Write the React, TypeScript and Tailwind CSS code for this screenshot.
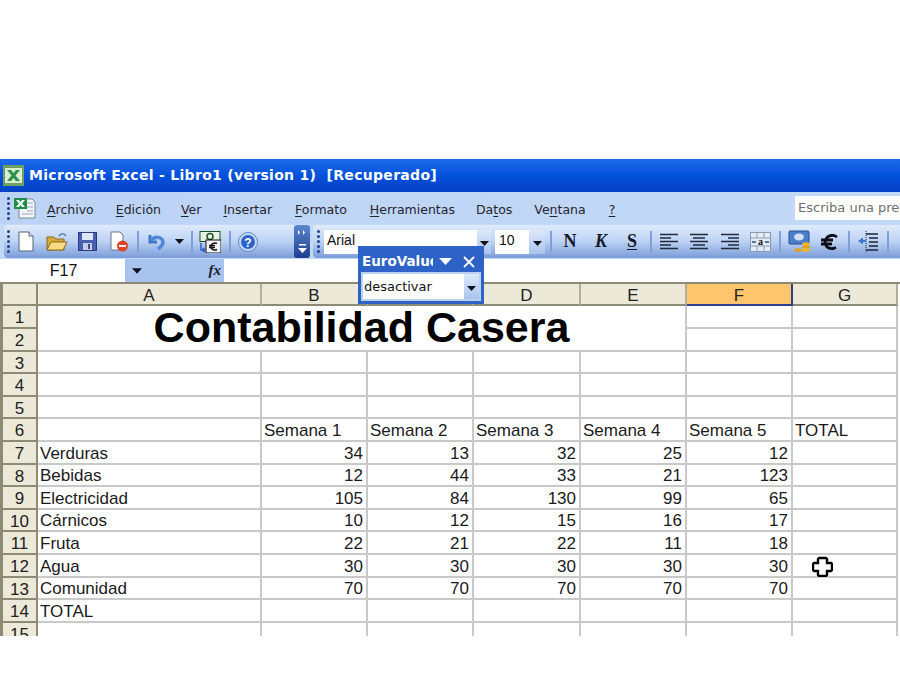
const sans = "font-['Liberation_Sans',Arial,sans-serif]";

const colWidths = "grid-cols-[38px_224px_106px_106px_107px_106px_106px_105px]";
const rowHeights =
  "grid-rows-[22px_23px_23px_22px_23px_22px_23px_23px_22px_23px_22px_23px_23px_22px_23px_22px]";

const rows: (string | number)[][] = [
  ["", "Semana 1", "Semana 2", "Semana 3", "Semana 4", "Semana 5", "TOTAL"],
  ["Verduras", 34, 13, 32, 25, 12, ""],
  ["Bebidas", 12, 44, 33, 21, 123, ""],
  ["Electricidad", 105, 84, 130, 99, 65, ""],
  ["Cárnicos", 10, 12, 15, 16, 17, ""],
  ["Fruta", 22, 21, 22, 11, 18, ""],
  ["Agua", 30, 30, 30, 30, 30, ""],
  ["Comunidad", 70, 70, 70, 70, 70, ""],
  ["TOTAL", "", "", "", "", "", ""],
  ["", "", "", "", "", "", ""],
];

function Grip() {
  return (
    <div className="flex w-[3px] shrink-0 flex-col gap-[2px]">
      {[0, 1, 2, 3, 4].map((i) => (
        <span key={i} className="h-[3px] w-[3px] rounded-full bg-[#27418f]" />
      ))}
    </div>
  );
}

function Sep({ className }: { className: string }) {
  return <span className={`h-[21px] w-[2px] shrink-0 bg-[#7f9fd6] ${className}`} />;
}

function Arrow({ className = "" }: { className?: string }) {
  return (
    <svg width="9" height="5" viewBox="0 0 9 5" className={`shrink-0 ${className}`}>
      <path d="M0 0h9L4.500 5z" fill="#10131c" />
    </svg>
  );
}

function DropButton({ className }: { className: string }) {
  return (
    <span className={`flex items-center justify-center bg-gradient-to-b from-[#dfeafb] to-[#a9c3ee] ${className}`}>
      <Arrow className="mt-1" />
    </span>
  );
}

function Menu({ pre, u, post, className }: { pre?: string; u: string; post?: string; className: string }) {
  return (
    <span className={`mt-[4px] whitespace-nowrap ${className}`}>
      {pre}
      <span className="underline underline-offset-2">{u}</span>
      {post}
    </span>
  );
}

function Aligned({ kind }: { kind: "left" | "center" | "right" }) {
  const rows = kind === "left"
    ? ["M0 1.500h18", "M0 5h11", "M0 8.500h18", "M0 12h11", "M0 15.500h18"]
    : kind === "center"
      ? ["M0 1.500h18", "M3 5h12", "M0 8.500h18", "M3 12h12", "M0 15.500h18"]
      : ["M0 1.500h18", "M7 5h11", "M0 8.500h18", "M7 12h11", "M0 15.500h18"];
  return (
    <svg width="18" height="17" viewBox="0 0 18 17" className="shrink-0">
      {rows.map((d) => (
        <path key={d} d={d} stroke="#23283a" strokeWidth="1.600" />
      ))}
    </svg>
  );
}

function ExcelCursor() {
  return (
    <svg width="21" height="21" viewBox="0 0 21 21">
      <path
        d="M7 2h7l1 1v4h4l1 1v6l-1 1h-4v4l-1 1H7l-1-1v-4H2l-1-1V8l1-1h4V3z"
        fill="#fff"
        stroke="#000"
        strokeWidth="2.400"
      />
    </svg>
  );
}

function TitleBar() {
  return (
    <div className="flex h-[33px] items-center bg-gradient-to-b from-[#1f6bec] via-[#0350dc] to-[#0542c4] pl-[3px]">
      <svg width="21" height="21" viewBox="0 0 21 21" className="shrink-0">
        <rect width="21" height="21" fill="#6f9f62" />
        <rect x="2" y="3" width="17" height="15" fill="#dcecd2" />
        <path d="M4 5h4l2.500 3L13 5h4l-4.500 5.500L17 16h-4l-2.500-3L8 16H4l4.500-5.500z" fill="#2a9350" />
      </svg>
      <span className="ml-[5px] whitespace-pre font-['DejaVu_Sans',sans-serif] text-[14px] font-bold tracking-[0.3px] text-white">
        Microsoft Excel - Libro1 (version 1)  [Recuperado]
      </span>
    </div>
  );
}

function MenuBar() {
  return (
    <div className="flex h-[32px] items-center bg-gradient-to-r from-[#bcd3f5] to-[#c3d9f8] pl-[7px] font-['DejaVu_Sans',sans-serif] text-[12.5px] text-[#1f2430]">
      <Grip />
      <svg width="26" height="23" viewBox="0 0 26 23" className="ml-[1px] shrink-0">
        <path d="M8 2h13l3 3v16H8z" fill="#f4f6fb" stroke="#7d8794" />
        <path d="M16 6h6M16 10h6M16 14h6M11 17h11" stroke="#9aa6b8" />
        <rect x="3" y="1" width="13" height="11" fill="#1f8f45" />
        <path d="M5 3h3l1.500 2L11 3h3l-3 3.500L14 10h-3L9.500 8 8 10H5l3-3.500z" fill="#fff" />
      </svg>
      <Menu u="A" post="rchivo" className="ml-[10px]" />
      <Menu u="E" post="dición" className="ml-[22px]" />
      <Menu u="V" post="er" className="ml-[20px]" />
      <Menu u="I" post="nsertar" className="ml-[22px]" />
      <Menu u="F" post="ormato" className="ml-[23px]" />
      <Menu u="H" post="erramientas" className="ml-[23px]" />
      <Menu pre="Da" u="t" post="os" className="ml-[21px]" />
      <Menu pre="Ve" u="n" post="tana" className="ml-[22px]" />
      <Menu u="?" className="ml-[23px]" />
      <div className="ml-auto flex h-[24px] w-[105px] items-center overflow-hidden bg-white pl-[3px] text-[13px] whitespace-nowrap text-[#6f6f6f]">
        Escriba una pregunta
      </div>
    </div>
  );
}

function StandardBar() {
  return (
    <div className="relative flex h-[33px] w-[306px] shrink-0 items-center rounded-[4px] bg-gradient-to-b from-[#e0ebfc] via-[#bcd2f4] to-[#7b9cd8] pl-[3px]">
      <Grip />
      <svg width="16" height="21" viewBox="0 0 16 21" className="ml-[8px] shrink-0">
        <path d="M1 1h10l4 4v15H1z" fill="#fff" stroke="#59657d" />
        <path d="M11 1v4h4" fill="#dfe6f2" stroke="#59657d" />
      </svg>
      <svg width="22" height="20" viewBox="0 0 22 20" className="ml-[12px] shrink-0">
        <path d="M1 5h7l2 2h8v11H1z" fill="#d8a93a" stroke="#8a6a1c" />
        <path d="M1 18l4-8h16l-4 8z" fill="#f7dc84" stroke="#8a6a1c" />
        <path d="M13 4c2-3 5-3 7 0" fill="none" stroke="#5a7fbd" strokeWidth="1.500" />
      </svg>
      <svg width="19" height="19" viewBox="0 0 19 19" className="ml-[10px] shrink-0">
        <rect x="0.500" y="0.500" width="18" height="18" fill="#4a5fb0" stroke="#2a3a80" />
        <rect x="4" y="1" width="11" height="7" fill="#dfe6f6" />
        <rect x="5" y="11" width="9" height="7" fill="#c8cede" />
        <rect x="10" y="12" width="2" height="5" fill="#3c4a90" />
      </svg>
      <svg width="19" height="21" viewBox="0 0 19 21" className="ml-[13px] shrink-0">
        <path d="M1 1h9l3 3v15H1z" fill="#fff" stroke="#6b7488" />
        <circle cx="12.500" cy="15" r="5.500" fill="#e0452a" />
        <rect x="9" y="14" width="7" height="2" fill="#fff" />
      </svg>
      <Sep className="ml-[8px]" />
      <svg width="18" height="17" viewBox="0 0 18 17" className="ml-[9px] shrink-0">
        <path d="M2 2v7h7" fill="none" stroke="#3f74c8" strokeWidth="3" />
        <path d="M3 8c3-5 11-5 12 1 0 3-2 5-5 7" fill="none" stroke="#4f86db" strokeWidth="3.500" />
      </svg>
      <Arrow className="ml-[9px]" />
      <Sep className="ml-[7px]" />
      <svg width="22" height="22" viewBox="0 0 22 22" className="ml-[6px] shrink-0">
        <rect x="1" y="0.500" width="20" height="10" fill="#e8f3e4" stroke="#14552c" />
        <circle cx="11" cy="5.500" r="3" fill="none" stroke="#14552c" strokeWidth="1.500" />
        <rect x="7" y="9" width="15" height="13" fill="#f4f4f4" stroke="#111" />
        <path d="M18 12.500c-3-1.500-6 0-6 3s3 4.500 6 3M10 14.500h6M10 16.500h6" fill="none" stroke="#111" strokeWidth="1.500" />
        <path d="M2 12v7h4M4 17l2 2-2 2" fill="none" stroke="#2d5fc4" strokeWidth="1.500" />
      </svg>
      <Sep className="ml-[8px]" />
      <svg width="20" height="20" viewBox="0 0 20 20" className="ml-[7px] shrink-0">
        <circle cx="10" cy="10" r="9.500" fill="#c9d9f4" stroke="#5d86cc" />
        <circle cx="10" cy="10" r="7" fill="#2f63c9" />
        <text x="10" y="14.500" textAnchor="middle" fontSize="12" fontWeight="700" fontFamily="Liberation Sans" fill="#fff">?</text>
      </svg>
      <div className="absolute top-0 right-0 flex h-[33px] w-[16px] flex-col items-center justify-between rounded-[3px] bg-gradient-to-b from-[#5f86cf] to-[#1d3f8f] py-[5px]">
        <svg width="9" height="5" viewBox="0 0 9 5">
          <path d="M0 0l2 2.500L0 5zM5 0l2 2.500L5 5z" fill="#fff" />
        </svg>
        <svg width="9" height="9" viewBox="0 0 9 9">
          <path d="M1 0h7v1.500H1zM0 4h9L4.500 9z" fill="#fff" />
        </svg>
      </div>
    </div>
  );
}

function FormatBar() {
  return (
    <div className="ml-[3px] flex h-[33px] min-w-0 flex-1 items-center overflow-hidden rounded-l-[4px] bg-gradient-to-b from-[#e0ebfc] via-[#bcd2f4] to-[#7b9cd8] pl-[4px]">
      <Grip />
      <div className={`ml-[4px] flex h-[24px] w-[167px] shrink-0 bg-white ${sans} text-[14px] text-[#111]`}>
        <span className="flex flex-1 items-center pb-[2px] pl-[3px]">Arial</span>
        <DropButton className="w-[14px]" />
      </div>
      <div className={`ml-[4px] flex h-[24px] w-[50px] shrink-0 bg-white ${sans} text-[14px] text-[#111]`}>
        <span className="flex flex-1 items-center pb-[2px] pl-[4px]">10</span>
        <DropButton className="w-[16px]" />
      </div>
      <Sep className="ml-[5px]" />
      <span className="ml-[9px] w-[18px] shrink-0 text-center font-['Liberation_Serif',serif] text-[18px] font-bold text-[#14182a]">N</span>
      <span className="ml-[14px] w-[16px] shrink-0 text-center font-['Liberation_Serif',serif] text-[18px] font-bold text-[#14182a] italic">K</span>
      <span className="ml-[16px] w-[14px] shrink-0 text-center font-['Liberation_Serif',serif] text-[18px] font-bold text-[#14182a] underline underline-offset-2">S</span>
      <Sep className="ml-[11px]" />
      <span className="ml-[8px] flex shrink-0"><Aligned kind="left" /></span>
      <span className="ml-[12px] flex shrink-0"><Aligned kind="center" /></span>
      <span className="ml-[13px] flex shrink-0"><Aligned kind="right" /></span>
      <svg width="21" height="20" viewBox="0 0 21 20" className="ml-[11px] shrink-0">
        <rect x="0.500" y="0.500" width="20" height="19" fill="#e4ebf5" stroke="#8b9ab4" />
        <path d="M0 6h21M0 14h21M7 0v6M14 0v6M7 14v6M14 14v6" stroke="#8b9ab4" />
        <path d="M2 10h4M15 10h4" stroke="#2b4b86" strokeWidth="1.500" />
        <text x="10.500" y="13" textAnchor="middle" fontSize="10" fontWeight="700" fontFamily="Liberation Serif" fill="#111">a</text>
      </svg>
      <Sep className="ml-[8px]" />
      <svg width="23" height="24" viewBox="0 0 23 24" className="ml-[7px] shrink-0">
        <rect x="1" y="1" width="20" height="13" rx="1" fill="#4c7fc9" stroke="#294f96" />
        <ellipse cx="11" cy="7" rx="5" ry="3.500" fill="#cfe0f6" />
        <ellipse cx="18" cy="14" rx="4" ry="1.800" fill="#eeb52a" />
        <ellipse cx="18" cy="17" rx="4" ry="1.800" fill="#e0a21c" />
        <ellipse cx="18" cy="20" rx="4" ry="1.800" fill="#eeb52a" />
        <ellipse cx="10" cy="20" rx="4" ry="1.800" fill="#e0a21c" />
      </svg>
      <svg width="18" height="16" viewBox="0 0 18 16" className="ml-[9px] shrink-0">
        <path d="M17 3C13 0 7 1 5.500 6.500S8 15 13 14.500l3-1M1 6h12M1 10h11" fill="none" stroke="#0d0f18" strokeWidth="2.800" />
      </svg>
      <Sep className="ml-[10px]" />
      <svg width="20" height="21" viewBox="0 0 20 21" className="ml-[8px] shrink-0">
        <path d="M8 3h12M11 7h9M11 11h9M11 15h9M8 19h12" stroke="#1e2336" strokeWidth="1.600" />
        <path d="M8 0v21" stroke="#1e2336" strokeDasharray="1 1" />
        <path d="M0 10l5-3.500V9h3v2H5v2.500z" fill="#3f74d0" />
      </svg>
      <Sep className="ml-[9px]" />
    </div>
  );
}

function FormulaBar() {
  return (
    <div className={`flex h-[23px] bg-white ${sans}`}>
      <div className="flex w-[125px] items-center justify-center pl-[2px] text-[16px] text-[#111]">F17</div>
      <div className="flex w-[99px] items-center justify-between bg-[#a9c3ef] pr-[3px] pl-[7px]">
        <Arrow className="h-[6px] w-[10px]" />
        <span className="font-['Liberation_Serif',serif] text-[15px] font-bold text-[#1a2030] italic">fx</span>
      </div>
    </div>
  );
}

function ColHead({ label, active }: { label: string; active?: boolean }) {
  return (
    <div
      className={
        active
          ? "flex items-center justify-center border-r-2 border-b-2 border-r-[#2f3f8f] border-b-[#2f3f8f] bg-[#ffc56c] pt-[3px] text-[#222]"
          : "flex items-center justify-center border-r-2 border-b-2 border-r-[#b3ae99] border-b-[#8e8a78] bg-[#ece9d8] pt-[3px] text-[#222]"
      }
    >
      {label}
    </div>
  );
}

function RowHead({ n }: { n: number }) {
  return (
    <div className="flex items-center justify-center border-r-2 border-b-2 border-l-[3px] border-r-[#8e8a78] border-b-[#8e8a78] border-l-[#8e8a78] bg-[#ece9d8] pt-[3px] text-[#222]">
      {n}
    </div>
  );
}

function Cell({ value }: { value: string | number }) {
  const numeric = typeof value === "number";
  return (
    <div
      className={`flex items-center overflow-hidden border-r-2 border-b-2 border-[#c9c9c9] bg-white pt-[2px] whitespace-nowrap text-[#1a1a1a] ${
        numeric ? "justify-end pr-[3px]" : "pl-[2px]"
      }`}
    >
      {value}
    </div>
  );
}

function Sheet() {
  return (
    <div className={`h-[354px] overflow-hidden border-t-2 border-[#8e8a78] ${sans} text-[17px]`}>
      <div className={`grid ${colWidths} ${rowHeights} w-[898px]`}>
        <div className="border-r-2 border-b-2 border-l-[3px] border-r-[#8e8a78] border-b-[#8e8a78] border-l-[#8e8a78] bg-[#ece9d8]" />
        {["A", "B", "C", "D", "E"].map((c) => (
          <ColHead key={c} label={c} />
        ))}
        <ColHead label="F" active />
        <ColHead label="G" />

        <RowHead n={1} />
        <div className="col-span-5 row-span-2 flex items-center justify-center border-r-2 border-b-2 border-[#c9c9c9] bg-white pb-[2px] text-[43px] leading-none font-bold text-black">
          Contabilidad Casera
        </div>
        <Cell value="" />
        <Cell value="" />

        <RowHead n={2} />
        <Cell value="" />
        <Cell value="" />

        {[3, 4, 5].map((n) => [
          <RowHead key={n} n={n} />,
          ...[0, 1, 2, 3, 4, 5, 6].map((c) => <Cell key={`${n}-${c}`} value="" />),
        ])}

        {rows.map((row, i) => [
          <RowHead key={i} n={i + 6} />,
          ...row.map((v, c) => <Cell key={`${i}-${c}`} value={v} />),
        ])}
      </div>
    </div>
  );
}

function EuroValue() {
  return (
    <div className="absolute top-[246px] left-[358px] flex h-[58px] w-[126px] flex-col border-[3px] border-[#2f62c6] bg-[#2f62c6]">
      <div className="flex h-[23px] shrink-0 items-center pt-[2px] pl-[1px]">
        <span className="w-[71px] overflow-hidden font-['DejaVu_Sans',sans-serif] text-[13.5px] font-bold whitespace-nowrap text-white">
          EuroValue
        </span>
        <svg width="13" height="7" viewBox="0 0 13 7" className="ml-[6px]">
          <path d="M0 0h13L6.500 7z" fill="#fff" />
        </svg>
        <svg width="12" height="12" viewBox="0 0 12 12" className="ml-[11px]">
          <path d="M1 1l10 10M11 1L1 11" stroke="#fff" strokeWidth="1.800" />
        </svg>
      </div>
      <div className="flex h-[29px] border-2 border-[#bcd0f0] bg-white font-['DejaVu_Sans',sans-serif] text-[13px] text-[#111]">
        <span className="flex flex-1 items-center pl-[1px]">desactivar</span>
        <DropButton className="w-[15px]" />
      </div>
    </div>
  );
}

export default function App() {
  return (
    <div className="relative h-[700px] w-[900px] overflow-hidden bg-white">
      <div className="pt-[159px]">
        <TitleBar />
        <MenuBar />
        <div className="flex h-[35px] items-start bg-[#c3d9f8] pt-[1px] pl-[4px]">
          <StandardBar />
          <FormatBar />
        </div>
        <FormulaBar />
        <Sheet />
      </div>
      <EuroValue />
      <div className="absolute top-[556px] left-[812px]">
        <ExcelCursor />
      </div>
    </div>
  );
}
